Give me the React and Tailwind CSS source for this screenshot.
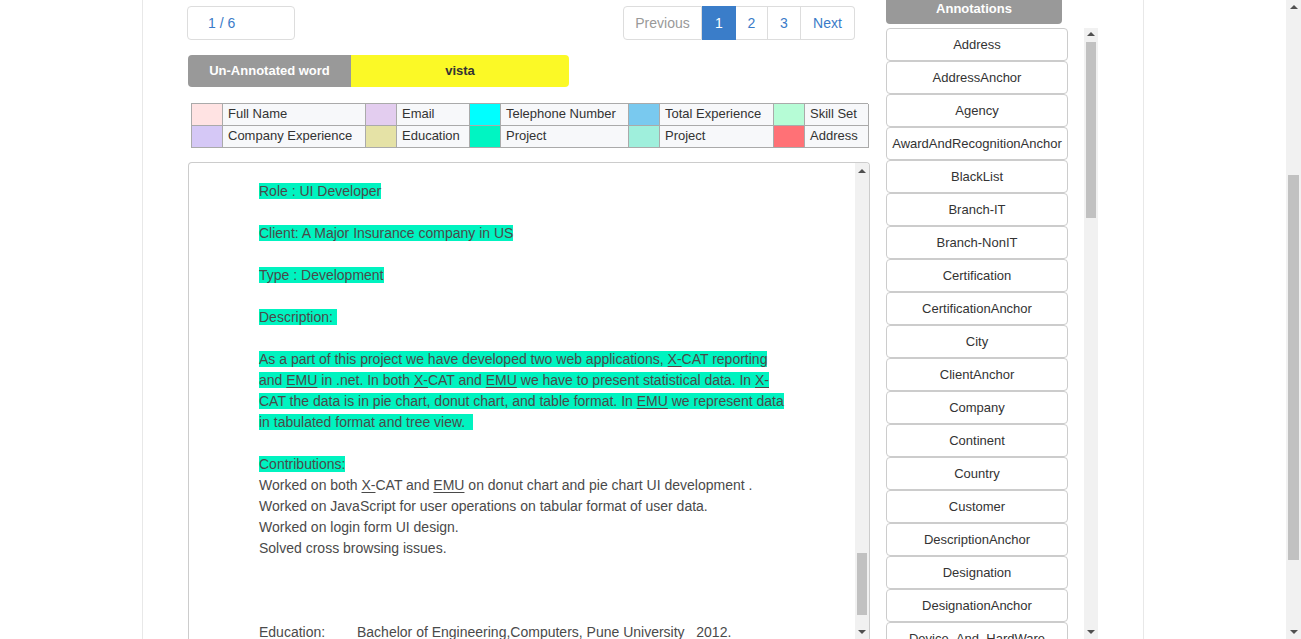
import React from 'react';

const legend = [
  [
    { color: 'bg-[#ffe3e3]', label: 'Full Name' },
    { color: 'bg-[#e3cdef]', label: 'Email' },
    { color: 'bg-[#00ffff]', label: 'Telephone Number' },
    { color: 'bg-[#79c9ef]', label: 'Total Experience' },
    { color: 'bg-[#b6fcd6]', label: 'Skill Set' },
  ],
  [
    { color: 'bg-[#d5c8f6]', label: 'Company Experience' },
    { color: 'bg-[#e5e2a6]', label: 'Education' },
    { color: 'bg-[#00f5c2]', label: 'Project' },
    { color: 'bg-[#9fefdc]', label: 'Project' },
    { color: 'bg-[#ff7176]', label: 'Address' },
  ],
];

const annotations = [
  'Address', 'AddressAnchor', 'Agency', 'AwardAndRecognitionAnchor', 'BlackList',
  'Branch-IT', 'Branch-NonIT', 'Certification', 'CertificationAnchor', 'City',
  'ClientAnchor', 'Company', 'Continent', 'Country', 'Customer',
  'DescriptionAnchor', 'Designation', 'DesignationAnchor', 'Device_And_HardWare',
];

// fake scrollbar, drawn so it looks the same in any browser
const Scrollbar = ({ width = 'w-[14px]', thumbTop, thumbHeight, upTop = 'pt-[6px]' }) => (
  <div className={`${width} h-full bg-[#f1f1f1] relative shrink-0`}>
    <div className={`flex justify-center ${upTop}`}>
      <div className="w-0 h-0 border-x-[4px] border-x-transparent border-b-[4px] border-b-[#505050]" />
    </div>
    <div className="absolute left-[2px] right-[2px] bg-[#c1c1c1]" style={{ top: thumbTop, height: thumbHeight }} />
    <div className="absolute bottom-[5px] left-0 right-0 flex justify-center">
      <div className="w-0 h-0 border-x-[4px] border-x-transparent border-t-[4px] border-t-[#505050]" />
    </div>
  </div>
);

const Hl = ({ children }) => <span className="bg-[#00f3c0]">{children}</span>;
const U = ({ children }) => <span className="underline underline-offset-2">{children}</span>;

export default function App() {
  return (
    <div className="w-[1301px] h-[639px] overflow-hidden flex bg-white font-['Liberation_Sans',Arial,sans-serif]">
      <div className="flex-1 flex justify-center">
        <div className="w-[1002px] h-full border-x border-[#e8e8e8] flex pl-[44px]">
          {/* Left column */}
          <div className="w-[683px] flex flex-col">
            <div className="mt-[6px] h-[34px] flex justify-between pr-[15px]">
              <div className="w-[108px] h-[34px] border border-[#dddddd] rounded-[4px] pl-[20px] flex items-center text-[14px] text-[#3a7bc8]">
                1 / 6
              </div>
              <div className="flex h-[34px] text-[14px]">
                <div className="w-[79px] border border-[#dddddd] rounded-l-[4px] flex items-center justify-center text-[#999999]">Previous</div>
                <div className="w-[34px] bg-[#3a7dc9] border border-[#3a7dc9] flex items-center justify-center text-white">1</div>
                <div className="w-[32px] border-y border-r border-[#dddddd] flex items-center justify-center text-[#3a7bc8]">2</div>
                <div className="w-[33px] border-y border-r border-[#dddddd] flex items-center justify-center text-[#3a7bc8]">3</div>
                <div className="w-[54px] border-y border-r border-[#dddddd] rounded-r-[4px] flex items-center justify-center text-[#3a7bc8]">Next</div>
              </div>
            </div>

            <div className="mt-[15px] ml-[1px] h-[32px] flex text-[13px] font-bold">
              <div className="w-[163px] bg-[#999999] rounded-l-[4px] text-white flex items-center justify-center">Un-Annotated word</div>
              <div className="w-[218px] bg-[#fbf926] rounded-r-[4px] text-[#333333] flex items-center justify-center">vista</div>
            </div>

            <div className="mt-[16px] ml-[4px] w-[677px] grid grid-cols-[31px_143px_31px_73px_31px_128px_31px_114px_31px_64px] border-l border-t border-[#aaaaaa] text-[13px] text-[#333333]">
              {legend.map((row, i) =>
                row.map((item, j) => (
                  <React.Fragment key={`${i}-${j}`}>
                    <div className={`h-[22px] border-r border-b border-[#aaaaaa] ${item.color}`} />
                    <div className="h-[22px] border-r border-b border-[#aaaaaa] bg-[#f7f8fa] pl-[5px] pb-[1px] flex items-center whitespace-nowrap">{item.label}</div>
                  </React.Fragment>
                ))
              )}
            </div>

            {/* Document */}
            <div className="mt-[14px] ml-[1px] w-[682px] flex-1 border border-b-0 border-[#cccccc] rounded-t-[4px] flex overflow-hidden">
              <div className="flex-1 pl-[70px] pt-[18px] text-[14px] leading-[21px] text-[#4a4a4a] whitespace-nowrap">
                <div><Hl>Role : UI Developer</Hl></div>
                <div>&nbsp;</div>
                <div><Hl>Client: A Major Insurance company in US</Hl></div>
                <div>&nbsp;</div>
                <div><Hl>Type : Development</Hl></div>
                <div>&nbsp;</div>
                <div><Hl>Description:&nbsp;</Hl></div>
                <div>&nbsp;</div>
                <div>
                  <Hl>
                    As a part of this project we have developed two web applications, <U>X-</U>CAT reporting<br />
                    and <U>EMU</U> in .net. In both <U>X-</U>CAT and <U>EMU</U> we have to present statistical data. In <U>X-</U><br />
                    CAT the data is in pie chart, donut chart, and table format. In <U>EMU</U> we represent data<br />
                    in tabulated format and tree view.&nbsp;&nbsp;
                  </Hl>
                </div>
                <div>&nbsp;</div>
                <div><Hl>Contributions:</Hl></div>
                <div>Worked on both <U>X-</U>CAT and <U>EMU</U> on donut chart and pie chart UI development .</div>
                <div>Worked on JavaScript for user operations on tabular format of user data.</div>
                <div>Worked on login form UI design.</div>
                <div>Solved cross browsing issues.</div>
                <div>&nbsp;</div>
                <div>&nbsp;</div>
                <div>&nbsp;</div>
                <div className="whitespace-pre">
                  <span className="inline-block w-[98px]">Education:</span>Bachelor of Engineering,Computers, Pune University   2012.
                </div>
              </div>
              <Scrollbar thumbTop={390} thumbHeight={62} upTop="pt-[6px]" />
            </div>
          </div>

          {/* Right column */}
          <div className="ml-[16px] flex flex-col">
            <div className="w-[176px] h-[24px] bg-[#999999] rounded-b-[4px] text-white text-[13px] font-bold text-center leading-[18px]">
              Annotations
            </div>
            <div className="mt-[4px] flex-1 flex gap-[16px] overflow-hidden">
              <div className="w-[182px] flex flex-col">
                {annotations.map((a) => (
                  <div key={a} className="h-[33px] shrink-0 border border-[#cccccc] rounded-[4px] flex items-center justify-center text-[13px] text-[#333333] whitespace-nowrap">
                    {a}
                  </div>
                ))}
              </div>
              <Scrollbar thumbTop={14} thumbHeight={176} upTop="pt-[4px]" />
            </div>
          </div>
        </div>
      </div>
      <Scrollbar width="w-[15px]" thumbTop={175} thumbHeight={385} upTop="pt-[5px]" />
    </div>
  );
}
